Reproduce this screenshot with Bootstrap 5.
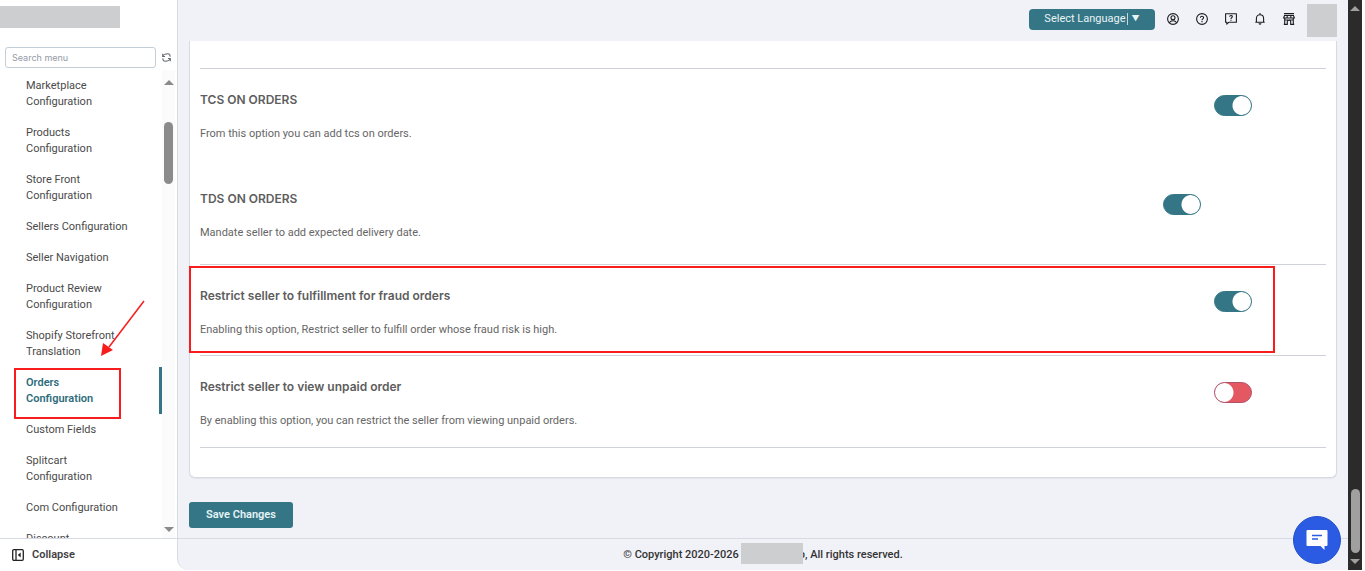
<!DOCTYPE html>
<html lang="en">
<head>
<meta charset="utf-8">
<meta name="viewport" content="width=device-width, initial-scale=1">
<title>Orders Configuration</title>
<link href="https://cdn.jsdelivr.net/npm/bootstrap@5.3.0/dist/css/bootstrap.min.css" rel="stylesheet">
<style>
  :root { --teal: #357686; --line: #d6dae2; --page: #f1f2f8; --mask: #cdced0; --note: #f81c1c; }
  body { font-family: Roboto, Inter, "Liberation Sans", sans-serif; font-size: 11px; line-height: 16px; color: #4a4a4a; background: #fff; }
  .app-shell { height: 100vh; padding: 0 3px 1px 0; }
  .masked { background: var(--mask); display: inline-block; }

  .side-panel { width: 177px; }
  .brand-mask { width: 120px; height: 22px; margin-top: 6px; }
  .menu-search { margin-top: 19px; padding-left: 5px; gap: 5px; }
  .menu-search .form-control { width: 151px; height: 21px; padding: 0 6px; font-family: Inter, sans-serif; font-size: 9px; border-color: #c3ced6; border-radius: 3px; }
  .menu-search .form-control::placeholder { color: #949ba5; }
  .icon-btn { border: 0; background: none; padding: 0; line-height: 0; color: #1c1c1e; }
  .menu-area { margin-top: 2px; min-height: 0; }
  .menu-list { width: 162px; }
  .menu-list a { display: block; padding: 8px 28px 7px 26px; color: #4a4a4a; text-decoration: none; }
  .menu-list .current { border-right: 3px solid var(--teal); padding-right: 25px; color: #2e6c7b; font-weight: 600; }
  .menu-clip { overflow: hidden; }
  .menu-scroll { width: 13px; padding: 10px 0 6px; background: #fbfbfb; color: #8b8b8b; }
  .thumb { width: 9px; border-radius: 5px; background: #8b8b8b; }
  .menu-scroll .thumb { height: 62px; margin-top: 37px; }
  .collapse-bar { height: 32px; border-top: 1px solid var(--line); padding-left: 12px; }
  .collapse-bar button { gap: 8px; font-weight: 600; line-height: 16px; color: #3f4144; }

  .note-box { position: absolute; border: 2px solid var(--note); pointer-events: none; }
  .note-menu { inset: 1px 41px -5px 14px; }
  .note-row { inset: 1px 51px 2px -11px; }
  .note-arrow { position: absolute; left: 98px; top: -68px; }

  .main-panel { background: var(--page); border-left: 1px solid var(--line); border-bottom-left-radius: 12px; min-width: 0; }
  .top-bar { height: 41px; padding-right: 11px; }
  .lang-btn { width: 126px; height: 21px; margin-bottom: 3px; padding: 0; font-size: 11px; line-height: 12px; color: #e8f3f5; background: var(--teal); border: 0; border-radius: 4px; }
  .lang-btn:hover { background: #2c6573; color: #fff; }
  .lang-sep { border-left: 1px solid #c5dadd; margin-left: 1px; padding-left: 4px; font-size: 8px; }
  .top-icons { gap: 17px; margin: 0 12px 4px; }
  .avatar-mask { width: 30px; height: 33px; }

  .settings-card { background: #fff; border: 1px solid var(--line); border-top: 0; border-radius: 0 0 6px 6px; margin: 0 11px; padding: 27px 10px 29px; box-shadow: 0 1px 1px #e3e5ec; }
  .option { padding: 23px 0 17px; border-bottom: 1px solid #cfd3d9; color: #666; }
  .option.open-end { border-bottom: 0; padding-bottom: 26px; }
  .option.roomy { padding-bottom: 23px; }
  .option:last-child { padding-bottom: 18px; }
  .option-head { border-top: 1px solid #cfd3d9; }
  .option h2 { font-family: Inter, sans-serif; font-size: 12px; line-height: 16px; font-weight: 600; margin-bottom: 18px; color: #5d5d5d; }
  .option p { margin: 0; }
  .toggle-col { width: 112px; padding-top: 3px; }
  .toggle-col.shifted { width: 163px; }
  .form-switch .form-check-input.pill { width: 38px; height: 21px; margin: 0; float: none; border: 1px solid #b0506a; border-radius: 11px; box-shadow: none; background: radial-gradient(circle at 9px 50%, #fff 9px, transparent 10px) #e45862; }
  .form-switch .form-check-input.pill:checked { border-color: var(--teal); background: radial-gradient(circle at 27px 50%, #fff 9px, transparent 10px) var(--teal); }

  .save-btn { width: 104px; height: 26px; padding: 0; font-size: 11px; line-height: 16px; font-weight: 600; color: #e4f4f6; background: var(--teal); border: 0; border-radius: 3px; margin: 24px 11px 0; }
  .save-btn:hover { background: #2c6573; color: #fff; }
  .page-foot { height: 32px; border-top: 1px solid var(--line); font-weight: 500; color: #333; }
  .name-mask { width: 62px; height: 21px; margin: 0 -4px 2px 2px; position: relative; }

  .page-scroll { width: 14px; background: #2b2b2b; color: #a0a0a0; padding: 6px 0; }
  .page-scroll .thumb { height: 64px; margin-bottom: 6px; background: #a0a0a0; }
  .chat-btn { position: fixed; right: 24px; bottom: 7px; width: 48px; height: 48px; border-radius: 50%; border: 1px solid #2450c8; background: #2b5be3; padding: 0; }
</style>
</head>
<body>
<div class="app-shell d-flex">

  <aside class="side-panel d-flex flex-column flex-shrink-0">
    <div class="masked brand-mask flex-shrink-0"></div>
    <div class="menu-search d-flex align-items-center">
      <input class="form-control" type="search" placeholder="Search menu" aria-label="Search menu">
      <button class="icon-btn" type="button" aria-label="Refresh menu">
        <svg width="11" height="11" viewBox="0 0 12 12" fill="none" stroke="#666a70" stroke-width="1.1"><path d="M1.800 2v2.800h2.600M2.100 4.500C3 2.300 5 2 7.500 2 9.300 2 10 3.200 10 5.200M10.200 10V7.200H7.600M9.900 7.500C9 9.700 7 10 4.500 10 2.700 10 2 8.800 2 6.800"/></svg>
      </button>
    </div>
    <div class="menu-area d-flex flex-grow-1">
      <div class="menu-clip">
        <nav class="menu-list" aria-label="Configuration">
          <a href="#">Marketplace Configuration</a>
          <a href="#">Products Configuration</a>
          <a href="#">Store Front Configuration</a>
          <a href="#">Sellers Configuration</a>
          <a href="#">Seller Navigation</a>
          <a href="#">Product Review Configuration</a>
          <a href="#">Shopify Storefront Translation</a>
          <div class="position-relative">
            <a href="#" class="current" aria-current="page">Orders<br>Configuration</a>
            <span class="note-box note-menu"></span>
            <svg class="note-arrow" width="50" height="60" viewBox="0 0 50 60"><path d="M46 2 11 48" stroke="#f81c1c" stroke-width="1.500"/><path d="M3 57 5 44 15 51Z" fill="#f81c1c"/></svg>
          </div>
          <a href="#">Custom Fields</a>
          <a href="#">Splitcart Configuration</a>
          <a href="#">Com Configuration</a>
          <a href="#">Discount</a>
        </nav>
      </div>
      <div class="menu-scroll d-flex flex-column align-items-center">
        <svg width="10" height="5" viewBox="0 0 10 5"><path d="M0 5 5 0l5 5z" fill="currentColor"/></svg>
        <div class="thumb"></div>
        <svg class="mt-auto" width="10" height="5" viewBox="0 0 10 5"><path d="M0 0h10L5 5z" fill="currentColor"/></svg>
      </div>
    </div>
    <div class="collapse-bar d-flex align-items-center flex-shrink-0">
      <button class="icon-btn d-flex align-items-center" type="button">
        <svg width="12" height="12" viewBox="0 0 12 12" fill="none" stroke="#222" stroke-width="1.300"><rect x=".7" y=".7" width="10.600" height="10.600" rx="1.200"/><path d="M4 1v10"/><path d="M8.700 3.500v5L5.800 6z" fill="#222" stroke="none"/></svg>
        <span>Collapse</span>
      </button>
    </div>
  </aside>

  <main class="main-panel d-flex flex-column flex-grow-1">
    <header class="top-bar d-flex align-items-center justify-content-end flex-shrink-0">
      <button class="btn lang-btn d-inline-flex align-items-center justify-content-center" type="button">Select Language<span class="lang-sep">▼</span></button>
      <div class="top-icons d-flex">
        <button class="icon-btn" type="button" aria-label="Account"><svg width="12" height="12" viewBox="0 0 12 12" fill="none" stroke="currentColor" stroke-width="1.100"><circle cx="6" cy="6" r="5.400"/><circle cx="6" cy="4.700" r="2"/><path d="M2.300 9.700c1.700-2.600 5.700-2.600 7.400 0"/></svg></button>
        <button class="icon-btn" type="button" aria-label="Help"><svg width="12" height="12" viewBox="0 0 12 12" fill="none" stroke="currentColor" stroke-width="1.100"><circle cx="6" cy="6" r="5.400"/><path d="M4.400 4.800C4.400 2.700 7.600 2.700 7.600 4.700 7.600 5.800 6 5.900 6 7.200M6 8.100v1.200"/></svg></button>
        <button class="icon-btn" type="button" aria-label="Support chat"><svg width="12" height="12" viewBox="0 0 12 12" fill="none" stroke="currentColor" stroke-width="1.100"><path d="M.6.700h10.800v8.500H4L1.800 11.200V9.200H.6z" stroke-linejoin="round"/><path d="M4.700 3.800C4.700 2 7.300 2 7.300 3.700 7.300 4.700 6 4.700 6 5.900M6 6.700v1"/></svg></button>
        <button class="icon-btn" type="button" aria-label="Notifications"><svg width="12" height="12" viewBox="0 0 12 12" fill="none" stroke="currentColor" stroke-width="1.100"><path d="M1.300 9.200h9.400M2.400 9V5.500C2.400 .5 9.600 .5 9.600 5.500V9M6 0v1.500"/><path d="M4.800 10.400q1.200 1.500 2.400 0"/></svg></button>
        <button class="icon-btn" type="button" aria-label="Store"><svg width="12" height="12" viewBox="0 0 12 12" fill="none" stroke="currentColor" stroke-width="1.100"><path d="M1 .6h10M1.500 2.500h9L11.400 5H.6zM1.700 5v6.400M10.300 5v6.400M.8 11.400h3.500V8.500C4.300 6.800 7.700 6.800 7.700 8.500v2.900h3.500M4.300 2.500 4 5M7.700 2.500 8 5M1.700 7h8.600"/></svg></button>
      </div>
      <span class="masked avatar-mask"></span>
    </header>

    <section class="settings-card">
      <div class="option-head"></div>
      <div class="option open-end d-flex">
        <div class="flex-grow-1"><h2 id="t-tcs">TCS ON ORDERS</h2><p>From this option you can add tcs on orders.</p></div>
        <div class="toggle-col form-switch ps-0"><input class="form-check-input pill" type="checkbox" role="switch" aria-labelledby="t-tcs" checked></div>
      </div>
      <div class="option roomy d-flex">
        <div class="flex-grow-1"><h2 id="t-tds">TDS ON ORDERS</h2><p>Mandate seller to add expected delivery date.</p></div>
        <div class="toggle-col shifted form-switch ps-0"><input class="form-check-input pill" type="checkbox" role="switch" aria-labelledby="t-tds" checked></div>
      </div>
      <div class="option d-flex position-relative">
        <div class="flex-grow-1"><h2 id="t-fraud">Restrict seller to fulfillment for fraud orders</h2><p>Enabling this option, Restrict seller to fulfill order whose fraud risk is high.</p></div>
        <div class="toggle-col form-switch ps-0"><input class="form-check-input pill" type="checkbox" role="switch" aria-labelledby="t-fraud" checked></div>
        <span class="note-box note-row"></span>
      </div>
      <div class="option d-flex">
        <div class="flex-grow-1"><h2 id="t-unpaid">Restrict seller to view unpaid order</h2><p>By enabling this option, you can restrict the seller from viewing unpaid orders.</p></div>
        <div class="toggle-col form-switch ps-0"><input class="form-check-input pill" type="checkbox" role="switch" aria-labelledby="t-unpaid"></div>
      </div>
    </section>

    <div><button class="btn save-btn" type="submit">Save Changes</button></div>

    <footer class="page-foot d-flex align-items-center justify-content-center mt-auto flex-shrink-0">
      <span>© Copyright 2020-2026</span><span class="masked name-mask"></span><span>o, All rights reserved.</span>
    </footer>
  </main>

  <div class="page-scroll d-flex flex-column align-items-center flex-shrink-0">
    <svg width="10" height="5" viewBox="0 0 10 5"><path d="M0 5 5 0l5 5z" fill="currentColor"/></svg>
    <div class="thumb mt-auto"></div>
    <svg width="10" height="5" viewBox="0 0 10 5"><path d="M0 0h10L5 5z" fill="currentColor"/></svg>
  </div>
</div>

<button class="chat-btn" type="button" aria-label="Open chat">
  <svg width="22" height="20" viewBox="0 0 22 20"><path d="M1.500 0h19q1 0 1 1v14q0 1-1 1h-2v4l-4-4h-13q-1 0-1-1V1q0-1 1-1z" fill="#fff"/><path d="M6 5.500h10M6 9h6" stroke="#2b5be3" stroke-width="1.600"/></svg>
</button>

<script src="https://cdn.jsdelivr.net/npm/bootstrap@5.3.0/dist/js/bootstrap.bundle.min.js"></script>
</body>
</html>
